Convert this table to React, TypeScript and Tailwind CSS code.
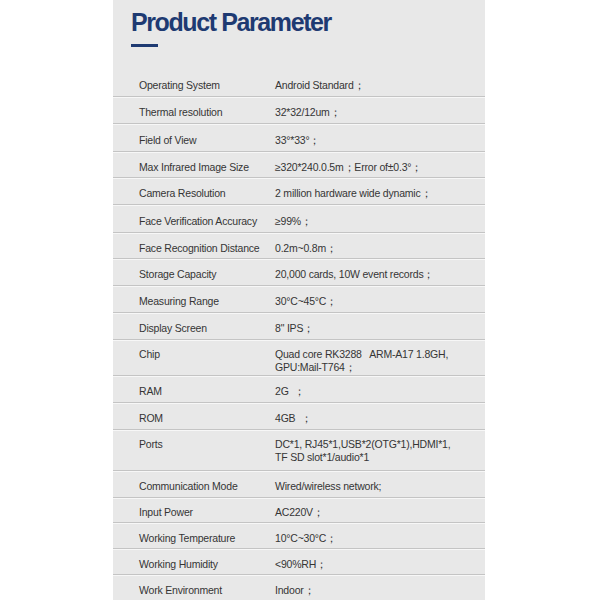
import React from 'react';

type Row = { label: string; value: string[]; h: number };

const rows: Row[] = [
  { label: 'Operating System', value: ['Android Standard；'], h: 27 },
  { label: 'Thermal resolution', value: ['32*32/12um；'], h: 27 },
  { label: 'Field of View', value: ['33°*33°；'], h: 28 },
  { label: 'Max Infrared Image Size', value: ['≥320*240.0.5m；Error of±0.3°；'], h: 26 },
  { label: 'Camera Resolution', value: ['2 million hardware wide dynamic；'], h: 27 },
  { label: 'Face Verification Accuracy', value: ['≥99%；'], h: 28 },
  { label: 'Face Recognition Distance', value: ['0.2m~0.8m；'], h: 26 },
  { label: 'Storage Capacity', value: ['20,000 cards, 10W event records；'], h: 27 },
  { label: 'Measuring Range', value: ['30°C~45°C；'], h: 27 },
  { label: 'Display Screen', value: ['8" IPS；'], h: 27 },
  { label: 'Chip', value: ['Quad core RK3288   ARM-A17 1.8GH,', 'GPU:Mail-T764；'], h: 36 },
  { label: 'RAM', value: ['2G  ；'], h: 27 },
  { label: 'ROM', value: ['4GB  ；'], h: 27 },
  { label: 'Ports', value: ['DC*1, RJ45*1,USB*2(OTG*1),HDMI*1,', 'TF SD slot*1/audio*1'], h: 41 },
  { label: 'Communication Mode', value: ['Wired/wireless network;'], h: 27 },
  { label: 'Input Power', value: ['AC220V；'], h: 25 },
  { label: 'Working Temperature', value: ['10°C~30°C；'], h: 26 },
  { label: 'Working Humidity', value: ['<90%RH；'], h: 26 },
  { label: 'Work Environment', value: ['Indoor；'], h: 27 },
];

const ParamRow = ({ row }: { row: Row }) => {
  const multi = row.value.length > 1;
  return (
    <div
      className={
        multi
          ? 'flex items-start pt-[8px] pl-[26px] border-b border-[#c4c4c4] shadow-[0_1px_0_#f7f7f7]'
          : 'flex items-center pt-[5px] pl-[26px] border-b border-[#c4c4c4] shadow-[0_1px_0_#f7f7f7]'
      }
      style={{ height: row.h }}
    >
      <div className="w-[136px] shrink-0 leading-[13px]">{row.label}</div>
      <div className="leading-[13px] whitespace-pre">
        {row.value.map((v) => (
          <div key={v}>{v}</div>
        ))}
      </div>
    </div>
  );
};

export default function App() {
  return (
    <div className="w-[600px] h-[600px] bg-white overflow-hidden pl-[113px] font-['Liberation_Sans',Arial,sans-serif]">
      <div className="w-[372px] h-[600px] bg-[#e8e8e8]">
        <div className="pt-[10px] pl-[18px]">
          <h1 className="text-[25px] leading-[25px] font-bold tracking-[-1.4px] text-[#1e3a72]">
            Product Parameter
          </h1>
          <div className="mt-[9px] w-[27px] h-[3px] bg-[#1e3a72]"></div>
        </div>
        <div className="mt-[23px] text-[10.5px] text-[#353535] tracking-[-0.2px]">
          {rows.map((r) => (
            <ParamRow key={r.label} row={r} />
          ))}
        </div>
      </div>
    </div>
  );
}
